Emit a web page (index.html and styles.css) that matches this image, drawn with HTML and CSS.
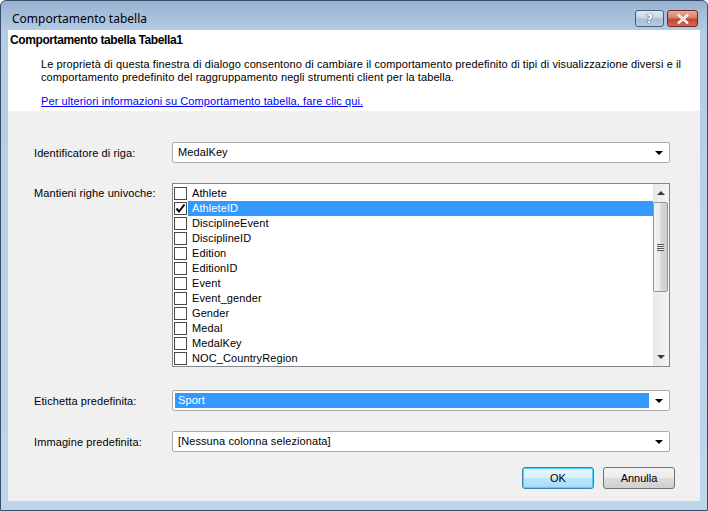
FILE: index.html
```html
<!DOCTYPE html>
<html lang="it">
<head>
<meta charset="UTF-8">
<title>Comportamento tabella</title>
<link rel="stylesheet" href="styles.css">
</head>
<body>
<div class="window">
    <div class="titlebar">
        <span class="title">Comportamento tabella</span>
        <div class="caption-buttons">
            <span class="cap-btn help">?</span>
            <span class="cap-btn close">
                <svg width="14" height="10" viewBox="0 0 14 10"><path d="M3 1.5 L11 8.5 M11 1.5 L3 8.5" stroke="#fff" stroke-width="2.6" stroke-linecap="square"/><path d="M3 1.5 L11 8.5 M11 1.5 L3 8.5" stroke="#6b2b22" stroke-width="0.6" opacity="0.3"/></svg>
            </span>
        </div>
    </div>
    <div class="client">
        <div class="header">
            <div class="header-title">Comportamento tabella Tabella1</div>
            <p class="header-text">Le proprietà di questa finestra di dialogo consentono di cambiare il comportamento predefinito di tipi di visualizzazione diversi e il comportamento predefinito del raggruppamento negli strumenti client per la tabella.</p>
            <a class="header-link" href="#">Per ulteriori informazioni su Comportamento tabella, fare clic qui.</a>
        </div>
        <div class="form">
            <div class="row row-id">
                <label class="label">Identificatore di riga:</label>
                <div class="combo"><span class="combo-value">MedalKey</span><span class="arrow"></span></div>
            </div>
            <div class="row row-list">
                <label class="label label-top">Mantieni righe univoche:</label>
                <div class="listbox">
                    <ul class="items" id="items"></ul>
                    <div class="scrollbar">
                        <span class="sb-arrow up"></span>
                        <div class="sb-track">
                            <div class="sb-thumb"><span class="grip"></span></div>
                        </div>
                        <span class="sb-arrow down"></span>
                    </div>
                </div>
            </div>
            <div class="row row-label">
                <label class="label">Etichetta predefinita:</label>
                <div class="combo"><span class="combo-value selected">Sport</span><span class="arrow"></span></div>
            </div>
            <div class="row row-image">
                <label class="label">Immagine predefinita:</label>
                <div class="combo"><span class="combo-value">[Nessuna colonna selezionata]</span><span class="arrow"></span></div>
            </div>
            <div class="buttons">
                <button class="btn default">OK</button>
                <button class="btn">Annulla</button>
            </div>
        </div>
    </div>
</div>

<script>
    let columns = ['Athlete', 'AthleteID', 'DisciplineEvent', 'DisciplineID', 'Edition', 'EditionID',
        'Event', 'Event_gender', 'Gender', 'Medal', 'MedalKey', 'NOC_CountryRegion'];
    let list = document.getElementById('items');

    columns.forEach(name => {
        let checked = name === 'AthleteID';
        let li = document.createElement('li');
        li.className = 'item';
        li.innerHTML = `
            <span class="check${checked ? ' checked' : ''}">${checked ? '<svg width="11" height="11" viewBox="0 0 11 11"><path d="M1.5 5.5 L4 8.5 L9.5 1.5" fill="none" stroke="#000" stroke-width="2"/></svg>' : ''}</span>
            <span class="item-text${checked ? ' selected' : ''}">${name}</span>
        `;
        list.appendChild(li);
    });
</script>
</body>
</html>
```

FILE: styles.css
```css
body {
    margin: 0;
    background: #ffffff;
}

.window {
    width: 708px;
    height: 511px;
    box-sizing: border-box;
    border: 1px solid #3b4d66;
    border-radius: 6px 6px 0 0;
    background: linear-gradient(to bottom, #98b2d1 0px, #b4cce6 30px, #bfd5ec 100%);
    display: flex;
    flex-direction: column;
}

.titlebar {
    height: 29px;
    display: flex;
    align-items: flex-start;
    justify-content: space-between;
}

.title {
    font-family: "Noto Sans", sans-serif;
    font-size: 12px;
    color: #000;
    margin: 9px 0 0 11px;
}

.caption-buttons {
    display: flex;
    gap: 3px;
    margin: 9px 9px 0 0;
}

.cap-btn {
    height: 17px;
    box-sizing: border-box;
    border: 1px solid #4d5c74;
    border-radius: 3px;
    display: flex;
    align-items: center;
    justify-content: center;
}

.help {
    width: 29px;
    background: linear-gradient(to bottom, #dfe8f2 0%, #c3d3e5 48%, #a8bdd6 52%, #b6cbe2 100%);
    font-family: "DejaVu Sans", sans-serif;
    font-weight: bold;
    font-size: 12px;
    color: #fff;
    text-shadow: 0 0 1px #2d3b52, 0 0 1px #2d3b52;
}

.close {
    width: 31px;
    border-color: #6e2a22;
    background: linear-gradient(to bottom, #e9a99b 0%, #d7826f 45%, #c4412d 55%, #d76a53 100%);
}

.client {
    margin: 0 7px 9px 7px;
    flex: 1;
    background: #f0f0f0;
    display: flex;
    flex-direction: column;
    font-family: "Liberation Sans", Arial, sans-serif;
    font-size: 11px;
    letter-spacing: 0.1px;
    color: #000;
}

.header {
    background: #ffffff;
    height: 81px;
    box-sizing: border-box;
    padding: 3px 0 0 2px;
}

.header-title {
    font-weight: bold;
    font-size: 12px;
    letter-spacing: -0.4px;
}

.header-text {
    margin: 11px 10px 0 31px;
    line-height: 13px;
}

.header-link {
    display: block;
    margin: 11px 0 0 31px;
    color: #0000ff;
    text-decoration: underline;
}

.form {
    flex: 1;
    padding: 31px 30px 0 26px;
    display: flex;
    flex-direction: column;
}

.row {
    display: flex;
    align-items: center;
}

.label {
    width: 138px;
    flex: none;
}

.label-top {
    align-self: flex-start;
    margin-top: 4px;
}

.row-list {
    margin-top: 20px;
}

.row-label {
    margin-top: 23px;
}

.row-image {
    margin-top: 20px;
}

.combo {
    flex: 1;
    height: 21px;
    box-sizing: border-box;
    border: 1px solid #acacac;
    border-radius: 2px;
    background: #ffffff;
    display: flex;
    align-items: center;
    padding: 2px;
}

.combo-value {
    flex: 1;
    height: 15px;
    line-height: 15px;
    padding-left: 3px;
}

.combo-value.selected {
    background: #3399ff;
    color: #ffffff;
}

.arrow {
    width: 0;
    height: 0;
    border-left: 4px solid transparent;
    border-right: 4px solid transparent;
    border-top: 4px solid #000;
    margin: 0 4px 0 6px;
}

.listbox {
    flex: 1;
    height: 184px;
    box-sizing: border-box;
    border: 1px solid #828790;
    background: #ffffff;
    display: flex;
}

.items {
    flex: 1;
    list-style: none;
    margin: 0;
    padding: 2px 0 0 1px;
}

.item {
    height: 15px;
    display: flex;
    align-items: center;
}

.check {
    width: 13px;
    height: 13px;
    box-sizing: border-box;
    border: 1px solid #4a4a4a;
    background: #ffffff;
    display: flex;
    align-items: center;
    justify-content: center;
    flex: none;
}

.item-text {
    flex: 1;
    height: 15px;
    line-height: 15px;
    padding-left: 4px;
    margin-left: 1px;
}

.item-text.selected {
    background: #3399ff;
    color: #ffffff;
}

.scrollbar {
    width: 16px;
    flex: none;
    background: linear-gradient(to right, #e8e8e8, #f5f5f5);
    display: flex;
    flex-direction: column;
    align-items: center;
    padding: 1px 0;
    box-sizing: border-box;
}

.sb-arrow {
    width: 0;
    height: 0;
    border-left: 4px solid transparent;
    border-right: 4px solid transparent;
    margin: 6px 0;
}

.sb-arrow.up {
    border-bottom: 4px solid #3c3c3c;
}

.sb-arrow.down {
    border-top: 4px solid #3c3c3c;
}

.sb-track {
    flex: 1;
    width: 100%;
}

.sb-thumb {
    width: 15px;
    height: 90px;
    box-sizing: border-box;
    margin-top: 1px;
    border: 1px solid #979797;
    border-radius: 2px;
    background: linear-gradient(to right, #f2f2f2 0%, #ebebeb 45%, #d6d6d6 55%, #cfcfcf 100%);
    display: flex;
    align-items: center;
    justify-content: center;
}

.grip {
    width: 7px;
    height: 7px;
    background: repeating-linear-gradient(to bottom, #555 0px, #555 1px, #eee 1px, #eee 2px);
}

.buttons {
    margin-top: 15px;
    display: flex;
    justify-content: flex-end;
    gap: 9px;
    margin-right: -5px;
}

.btn {
    width: 72px;
    height: 22px;
    box-sizing: border-box;
    border: 1px solid #707070;
    border-radius: 3px;
    background: linear-gradient(to bottom, #f2f2f2 0%, #ebebeb 50%, #dddddd 51%, #cfcfcf 100%);
    font-family: "Liberation Sans", Arial, sans-serif;
    font-size: 11px;
    color: #000;
    padding: 0;
}

.btn.default {
    border-color: #3c7fb1;
    box-shadow: inset 0 0 0 1px #48d4fb;
    background: linear-gradient(to bottom, #eaf6fd 0%, #d9f0fc 50%, #bee6fd 51%, #a7d9f5 100%);
}
```
